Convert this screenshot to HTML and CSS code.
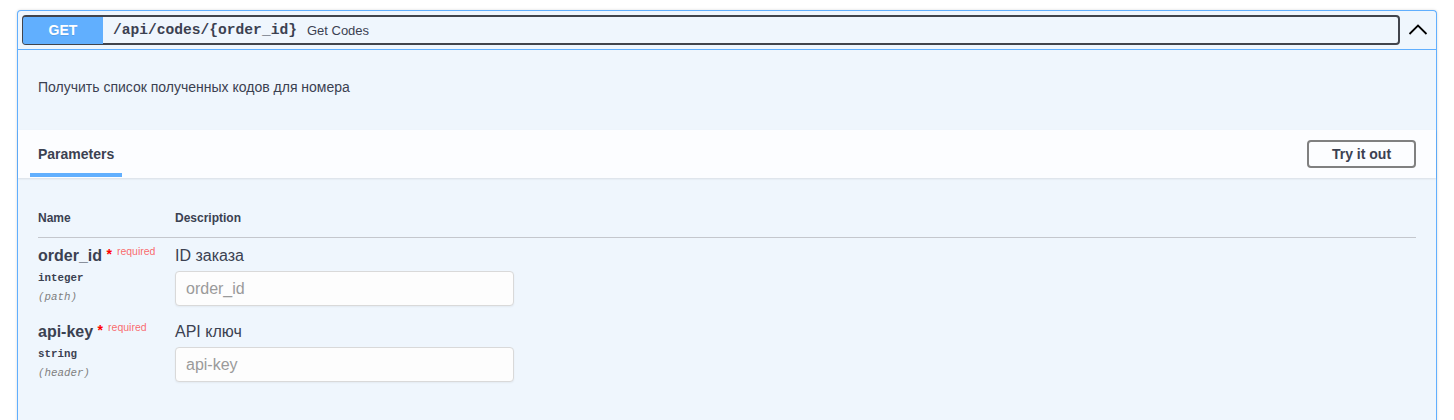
FILE: index.html
```html
<!DOCTYPE html>
<html lang="ru">
<head>
    <meta charset="UTF-8">
    <meta name="viewport" content="width=device-width, initial-scale=1.0">
    <title>Get Codes</title>
    <link rel="stylesheet" href="styles.css">
</head>
<body>
    <div class="wrapper">
        <div class="opblock">
            <div class="summary">
                <button class="summary-control">
                    <span class="method">GET</span>
                    <span class="path">/api/codes/{order_id}</span>
                    <span class="summary-desc">Get Codes</span>
                </button>
                <button class="arrow" aria-label="collapse">
                    <svg width="20" height="20" viewBox="0 0 20 20"><path d="M1.5 14 L10 5.5 L18.5 14" fill="none" stroke="#000" stroke-width="1.8"/></svg>
                </button>
            </div>
            <div class="op-description">Получить список полученных кодов для номера</div>
            <div class="section-header">
                <div class="tab">Parameters</div>
                <button class="try-out">Try it out</button>
            </div>
            <div class="params">
                <div class="params-head">
                    <div>Name</div>
                    <div>Description</div>
                </div>
                <div class="param-row">
                    <div class="param-name">
                        <div class="name">order_id <span class="star">*</span><span class="req">required</span></div>
                        <div class="type">integer</div>
                        <div class="in">(path)</div>
                    </div>
                    <div class="param-desc">
                        <div class="desc-text">ID заказа</div>
                        <input type="text" placeholder="order_id">
                    </div>
                </div>
                <div class="param-row">
                    <div class="param-name">
                        <div class="name">api-key <span class="star">*</span><span class="req">required</span></div>
                        <div class="type">string</div>
                        <div class="in">(header)</div>
                    </div>
                    <div class="param-desc">
                        <div class="desc-text">API ключ</div>
                        <input type="text" placeholder="api-key">
                    </div>
                </div>
            </div>
        </div>
    </div>
</body>
</html>
```

FILE: styles.css
```css
* { box-sizing: border-box; }
body { margin: 0; background: #fff; font-family: 'Liberation Sans', Arial, sans-serif; color: #3b4151; }
.wrapper { padding: 10px 17px 0; }
.opblock { border: 1px solid #61affe; border-bottom: none; border-radius: 4px 4px 0 0; background: #eff6fd; box-shadow: 0 0 3px rgba(0, 0, 0, 0.15); height: 420px; }
.summary { display: flex; align-items: center; padding: 4px 0 4px 4px; border-bottom: 1px solid #61affe; }
.summary-control { flex: 1; display: flex; align-items: center; height: 30px; padding: 0; border: 2px solid #41444c; border-radius: 4px; background: transparent; font-family: inherit; color: #3b4151; text-align: left; cursor: pointer; }
.method { width: 80px; height: 27px; margin-left: -1px; display: flex; align-items: center; justify-content: center; background: #61affe; color: #fff; font-size: 14px; font-weight: bold; border-radius: 2px 0 0 2px; text-shadow: 0 1px 0 rgba(0, 0, 0, 0.1); }
.path { padding: 0 10px; font-family: 'Liberation Mono', monospace; font-size: 14.6px; font-weight: bold; }
.summary-desc { font-size: 13px; }
.arrow { width: 36px; height: 30px; display: flex; align-items: center; justify-content: center; padding: 0; border: none; background: none; cursor: pointer; }
.op-description { padding: 29px 20px 35px; font-size: 14px; line-height: 16px; }
.section-header { display: flex; justify-content: space-between; align-items: center; height: 48px; padding: 0 20px 0 12px; background: rgba(255, 255, 255, 0.8); box-shadow: 0 1px 2px rgba(0, 0, 0, 0.1); }
.tab { align-self: stretch; display: flex; align-items: center; padding: 5px 8px 0; margin-bottom: 1px; border-bottom: 4px solid #61affe; font-size: 14px; font-weight: bold; }
.try-out { width: 109px; height: 28px; border: 2px solid #808080; border-radius: 4px; background: transparent; font-family: inherit; font-size: 14px; font-weight: bold; color: #3b4151; cursor: pointer; }
.params { padding: 31px 20px 0; }
.params-head { display: grid; grid-template-columns: 137px 1fr; font-size: 12px; font-weight: bold; line-height: 18px; padding-bottom: 10px; border-bottom: 1px solid #c4c7cd; }
.param-row { display: grid; grid-template-columns: 137px 1fr; padding: 8px 0; }
.name { height: 20px; font-size: 16px; font-weight: bold; line-height: 20px; white-space: nowrap; }
.star { color: red; font-size: 14px; line-height: 1; vertical-align: 2px; }
.req { margin-left: 5px; font-size: 10.5px; font-weight: normal; line-height: 1; color: rgba(255, 0, 0, 0.6); vertical-align: 6px; }
.type { margin-top: 5px; font-family: 'Liberation Mono', monospace; font-size: 10.8px; font-weight: bold; line-height: 14px; }
.in { margin-top: 5px; font-family: 'Liberation Mono', monospace; font-size: 10.8px; font-style: italic; color: #808080; line-height: 14px; }
.desc-text { font-size: 16px; line-height: 20px; }
.param-desc input { display: block; width: 339px; height: 35px; margin-top: 5px; padding: 8px 10px; border: 1px solid #d9d9d9; border-radius: 4px; background: #fdfdfd; box-shadow: 0 1px 2px rgba(0, 0, 0, 0.05); font-family: inherit; font-size: 16px; color: #3b4151; }
.param-desc input::placeholder { color: #9a9a9a; }
```
